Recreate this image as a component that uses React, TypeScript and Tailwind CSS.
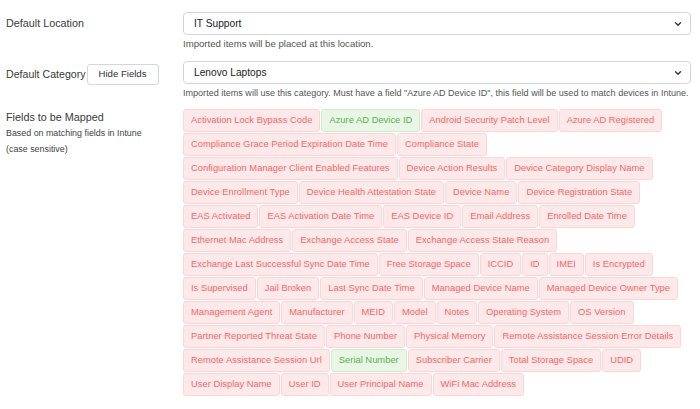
import { ChevronDown } from "lucide-react";

const fields: [string, boolean][] = [
  ["Activation Lock Bypass Code", false],
  ["Azure AD Device ID", true],
  ["Android Security Patch Level", false],
  ["Azure AD Registered", false],
  ["Compliance Grace Period Expiration Date Time", false],
  ["Compliance State", false],
  ["Configuration Manager Client Enabled Features", false],
  ["Device Action Results", false],
  ["Device Category Display Name", false],
  ["Device Enrollment Type", false],
  ["Device Health Attestation State", false],
  ["Device Name", false],
  ["Device Registration State", false],
  ["EAS Activated", false],
  ["EAS Activation Date Time", false],
  ["EAS Device ID", false],
  ["Email Address", false],
  ["Enrolled Date Time", false],
  ["Ethernet Mac Address", false],
  ["Exchange Access State", false],
  ["Exchange Access State Reason", false],
  ["Exchange Last Successful Sync Date Time", false],
  ["Free Storage Space", false],
  ["ICCID", false],
  ["ID", false],
  ["IMEI", false],
  ["Is Encrypted", false],
  ["Is Supervised", false],
  ["Jail Broken", false],
  ["Last Sync Date Time", false],
  ["Managed Device Name", false],
  ["Managed Device Owner Type", false],
  ["Management Agent", false],
  ["Manufacturer", false],
  ["MEID", false],
  ["Model", false],
  ["Notes", false],
  ["Operating System", false],
  ["OS Version", false],
  ["Partner Reported Threat State", false],
  ["Phone Number", false],
  ["Physical Memory", false],
  ["Remote Assistance Session Error Details", false],
  ["Remote Assistance Session Url", false],
  ["Serial Number", true],
  ["Subscriber Carrier", false],
  ["Total Storage Space", false],
  ["UDID", false],
  ["User Display Name", false],
  ["User ID", false],
  ["User Principal Name", false],
  ["WiFi Mac Address", false],
];

function Select({ value }: { value: string }) {
  return (
    <div className="h-[23px] w-[508px] flex items-center justify-between rounded-[4px] border border-[#d3d7db] bg-white pl-[10px] pr-[7px] text-[10.2px] text-[#222]">
      <span>{value}</span>
      <ChevronDown size={10} strokeWidth={3.2} className="text-[#333]" />
    </div>
  );
}

export default function App() {
  return (
    <div
      className="w-[700px] h-[409px] bg-white text-[#3a3a3a] pl-[6px] pt-[12px]"
      style={{ fontFamily: "'Liberation Sans', Arial, sans-serif" }}
    >
      <div className="flex">
        <div className="w-[177px] shrink-0 h-[23px] flex items-center text-[10.8px]">Default Location</div>
        <div className="w-[508px] shrink-0">
          <Select value="IT Support" />
          <div className="mt-[2px] text-[9.6px] text-[#555] leading-[14px] whitespace-nowrap">
            Imported items will be placed at this location.
          </div>
        </div>
      </div>

      <div className="flex mt-[10px]">
        <div className="w-[177px] shrink-0 h-[23px] mt-[2px] flex items-center text-[10.6px]">
          <span>Default Category</span>
          <button
            type="button"
            className="ml-[1px] h-[21px] w-[72px] rounded-[3px] border border-[#d3d7db] bg-white text-[9.6px] text-[#333]"
          >
            Hide Fields
          </button>
        </div>
        <div className="w-[508px] shrink-0">
          <Select value="Lenovo Laptops" />
          <div className="mt-[2px] text-[9.05px] text-[#555] leading-[14px] whitespace-nowrap">
            Imported items will use this category. Must have a field "Azure AD Device ID", this field will be used to
            match devices in Intune.
          </div>
        </div>
      </div>

      <div className="flex mt-[9px]">
        <div className="w-[177px] shrink-0">
          <div className="text-[10.8px] leading-[16px]">Fields to be Mapped</div>
          <div className="text-[8.9px] leading-[16px] text-[#444]">Based on matching fields in Intune</div>
          <div className="text-[8.9px] leading-[16px] text-[#444]">(case sensitive)</div>
        </div>
        <div className="w-[508px] shrink-0 flex flex-wrap gap-[1px]">
          {fields.map(([name, ok]) => (
            <span
              key={name}
              className={
                ok
                  ? "h-[23px] flex items-center px-[7px] rounded-[3px] border border-[#d4ecca] bg-[#eaf6e5] text-[9.4px] text-[#55b34f] whitespace-nowrap"
                  : "h-[23px] flex items-center px-[7px] rounded-[3px] border border-[#fbd6d6] bg-[#fde9e9] text-[9.4px] text-[#f56868] whitespace-nowrap"
              }
            >
              {name}
            </span>
          ))}
        </div>
      </div>
    </div>
  );
}
